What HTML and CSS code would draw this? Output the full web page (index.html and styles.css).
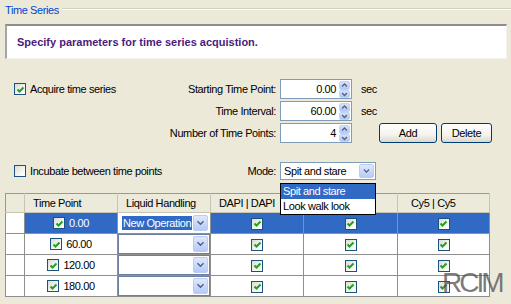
FILE: index.html
```html
<!DOCTYPE html>
<html lang="en">
<head>
  <meta charset="UTF-8" />
  <meta name="viewport" content="width=device-width, initial-scale=1" />
  <title>Time Series</title>
  <link rel="stylesheet" href="styles.css">
</head>
<body>
  <div class="panel">
    <div class="group-head">
      <span class="group-title">Time Series</span>
      <span class="group-line"></span>
    </div>

    <div class="message">Specify parameters for time series acquistion.</div>

    <div class="params">
      <label class="check-label">
        <span class="chk"><svg viewBox="0 0 9 9"><path d="M1.5 4.5 L3.5 6.5 L7.5 2.5" /></svg></span>
        Acquire time series
      </label>
      <span class="field-label">Starting Time Point:</span>
      <div class="spin">
        <span class="spin-value">0.00</span>
        <span class="spin-btns">
          <span class="spin-btn"><svg viewBox="0 0 11 8"><path d="M2.5 5.5 L5.5 2.5 L8.5 5.5" /></svg></span>
          <span class="spin-btn"><svg viewBox="0 0 11 8"><path d="M2.5 2.5 L5.5 5.5 L8.5 2.5" /></svg></span>
        </span>
      </div>
      <span class="unit">sec</span>
      <span></span>

      <span></span>
      <span class="field-label">Time Interval:</span>
      <div class="spin">
        <span class="spin-value">60.00</span>
        <span class="spin-btns">
          <span class="spin-btn"><svg viewBox="0 0 11 8"><path d="M2.5 5.5 L5.5 2.5 L8.5 5.5" /></svg></span>
          <span class="spin-btn"><svg viewBox="0 0 11 8"><path d="M2.5 2.5 L5.5 5.5 L8.5 2.5" /></svg></span>
        </span>
      </div>
      <span class="unit">sec</span>
      <span></span>

      <span></span>
      <span class="field-label">Number of Time Points:</span>
      <div class="spin">
        <span class="spin-value">4</span>
        <span class="spin-btns">
          <span class="spin-btn"><svg viewBox="0 0 11 8"><path d="M2.5 5.5 L5.5 2.5 L8.5 5.5" /></svg></span>
          <span class="spin-btn"><svg viewBox="0 0 11 8"><path d="M2.5 2.5 L5.5 5.5 L8.5 2.5" /></svg></span>
        </span>
      </div>
      <span></span>
      <div class="actions">
        <button class="btn add">Add</button>
        <button class="btn delete">Delete</button>
      </div>
    </div>

    <div class="params mode-row">
      <label class="check-label">
        <span class="chk empty"></span>
        Incubate between time points
      </label>
      <span class="field-label">Mode:</span>
      <div class="combo">
        <span class="combo-text">Spit and stare</span>
        <span class="combo-btn"><svg viewBox="0 0 15 16"><path d="M4 6 L7.5 9.5 L11 6" /></svg></span>
        <ul class="combo-list">
          <li class="picked">Spit and stare</li>
          <li>Look walk look</li>
        </ul>
      </div>
    </div>

    <table class="grid">
      <colgroup>
        <col style="width: 19px">
        <col style="width: 93px">
        <col style="width: 93px">
        <col style="width: 93px">
        <col style="width: 94px">
        <col style="width: 92px">
      </colgroup>
      <thead>
        <tr>
          <th></th>
          <th>Time Point</th>
          <th>Liquid Handling</th>
          <th>DAPI | DAPI</th>
          <th></th>
          <th class="wide-pad">Cy5 | Cy5</th>
        </tr>
      </thead>
      <tbody>
        <tr class="sel">
          <td class="row-head"></td>
          <td><div class="tp"><span class="chk sm"><svg viewBox="0 0 9 9"><path d="M1.5 4.5 L3.5 6.5 L7.5 2.5" /></svg></span>0.00</div></td>
          <td>
            <div class="cell-combo editing">
              <span class="cell-text"><span class="hl">New Operation</span></span>
              <span class="combo-btn"><svg viewBox="0 0 15 16"><path d="M4 6 L7.5 9.5 L11 6" /></svg></span>
            </div>
          </td>
          <td><span class="chk sm"><svg viewBox="0 0 9 9"><path d="M1.5 4.5 L3.5 6.5 L7.5 2.5" /></svg></span></td>
          <td><span class="chk sm"><svg viewBox="0 0 9 9"><path d="M1.5 4.5 L3.5 6.5 L7.5 2.5" /></svg></span></td>
          <td><span class="chk sm"><svg viewBox="0 0 9 9"><path d="M1.5 4.5 L3.5 6.5 L7.5 2.5" /></svg></span></td>
        </tr>
        <tr>
          <td class="row-head"></td>
          <td><div class="tp"><span class="chk sm"><svg viewBox="0 0 9 9"><path d="M1.5 4.5 L3.5 6.5 L7.5 2.5" /></svg></span>60.00</div></td>
          <td>
            <div class="cell-combo">
              <span class="cell-text"></span>
              <span class="combo-btn"><svg viewBox="0 0 15 16"><path d="M4 6 L7.5 9.5 L11 6" /></svg></span>
            </div>
          </td>
          <td><span class="chk sm"><svg viewBox="0 0 9 9"><path d="M1.5 4.5 L3.5 6.5 L7.5 2.5" /></svg></span></td>
          <td><span class="chk sm"><svg viewBox="0 0 9 9"><path d="M1.5 4.5 L3.5 6.5 L7.5 2.5" /></svg></span></td>
          <td><span class="chk sm"><svg viewBox="0 0 9 9"><path d="M1.5 4.5 L3.5 6.5 L7.5 2.5" /></svg></span></td>
        </tr>
        <tr>
          <td class="row-head"></td>
          <td><div class="tp"><span class="chk sm"><svg viewBox="0 0 9 9"><path d="M1.5 4.5 L3.5 6.5 L7.5 2.5" /></svg></span>120.00</div></td>
          <td>
            <div class="cell-combo">
              <span class="cell-text"></span>
              <span class="combo-btn"><svg viewBox="0 0 15 16"><path d="M4 6 L7.5 9.5 L11 6" /></svg></span>
            </div>
          </td>
          <td><span class="chk sm"><svg viewBox="0 0 9 9"><path d="M1.5 4.5 L3.5 6.5 L7.5 2.5" /></svg></span></td>
          <td><span class="chk sm"><svg viewBox="0 0 9 9"><path d="M1.5 4.5 L3.5 6.5 L7.5 2.5" /></svg></span></td>
          <td><span class="chk sm"><svg viewBox="0 0 9 9"><path d="M1.5 4.5 L3.5 6.5 L7.5 2.5" /></svg></span></td>
        </tr>
        <tr>
          <td class="row-head"></td>
          <td><div class="tp"><span class="chk sm"><svg viewBox="0 0 9 9"><path d="M1.5 4.5 L3.5 6.5 L7.5 2.5" /></svg></span>180.00</div></td>
          <td>
            <div class="cell-combo">
              <span class="cell-text"></span>
              <span class="combo-btn"><svg viewBox="0 0 15 16"><path d="M4 6 L7.5 9.5 L11 6" /></svg></span>
            </div>
          </td>
          <td><span class="chk sm"><svg viewBox="0 0 9 9"><path d="M1.5 4.5 L3.5 6.5 L7.5 2.5" /></svg></span></td>
          <td><span class="chk sm"><svg viewBox="0 0 9 9"><path d="M1.5 4.5 L3.5 6.5 L7.5 2.5" /></svg></span></td>
          <td><span class="chk sm"><svg viewBox="0 0 9 9"><path d="M1.5 4.5 L3.5 6.5 L7.5 2.5" /></svg></span></td>
        </tr>
      </tbody>
    </table>

    <div class="watermark">RCIM</div>
  </div>
</body>
</html>
```

FILE: styles.css
```css
* {
  box-sizing: border-box;
}

body {
  margin: 0;
  background: #ece9d8;
  font-family: 'Liberation Sans', Arial, sans-serif;
  font-size: 11px;
  letter-spacing: -0.4px;
  color: #000;
}

.panel {
  position: relative;
  width: 511px;
  height: 304px;
  overflow: hidden;
}

/* group box heading */
.group-head {
  display: flex;
  align-items: flex-start;
  height: 18px;
}

.group-title {
  color: #0046d5;
  padding: 4px 3px 0 5px;
  line-height: 12px;
}

.group-line {
  flex: 1;
  margin-top: 8px;
  border-top: 1px solid #d0d0bf;
  border-bottom: 1px solid #fff;
}

.message {
  margin: 6px 4px 0 5px;
  height: 35px;
  background: #fff;
  border-style: solid;
  border-width: 2px 1px 1px 2px;
  border-color: #8d8d8d #f4f3ee #f4f3ee #a5a5a5;
  padding-left: 10px;
  display: flex;
  align-items: center;
  font-weight: bold;
  color: #4c1a80;
  letter-spacing: 0;
}

/* parameter rows */
.params {
  display: grid;
  grid-template-columns: 146px 120px 72px 26px auto;
  grid-template-rows: repeat(3, 20px);
  row-gap: 2px;
  margin-top: 20px;
  padding-left: 14px;
  align-items: center;
}

.mode-row {
  grid-template-rows: 18px;
  margin-top: 19px;
}

.check-label {
  display: flex;
  align-items: center;
  gap: 4px;
  white-space: nowrap;
}

.field-label {
  text-align: right;
  padding-right: 4px;
  white-space: nowrap;
}

.unit {
  padding-left: 9px;
}

.chk {
  width: 12px;
  height: 12px;
  flex: none;
  display: inline-flex;
  align-items: center;
  justify-content: center;
  border: 1px solid #1c5180;
  background: linear-gradient(135deg, #dcdcd7, #f8f8f4 70%, #fff);
  vertical-align: middle;
}

.chk svg {
  width: 9px;
  height: 9px;
}

.chk path {
  fill: none;
  stroke: #21a121;
  stroke-width: 2;
}

.chk.sm {
  width: 12px;
  height: 12px;
}

.spin {
  display: flex;
  align-items: center;
  height: 20px;
  border: 1px solid #7f9db9;
  background: #fff;
  padding: 1px 1px 1px 0;
}

.spin-value {
  flex: 1;
  text-align: right;
  padding-right: 3px;
}

.spin-btns {
  display: flex;
  flex-direction: column;
  width: 11px;
  height: 16px;
}

.spin-btn {
  flex: 1;
  display: flex;
  background: linear-gradient(#d6e2fd, #b2c7f6);
  border: 1px solid #c3d3f8;
  border-radius: 2px;
}

.spin-btn svg {
  width: 100%;
  height: 100%;
}

.spin-btn path,
.combo-btn path {
  fill: none;
  stroke: #4d6185;
  stroke-width: 1.6;
}

.actions {
  display: flex;
  gap: 4px;
  padding-left: 1px;
}

.btn {
  height: 20px;
  padding: 0;
  border: 1px solid #003c74;
  border-radius: 3px;
  background: linear-gradient(#fefefe, #f4f3ee 60%, #dcd8cc);
  font-family: inherit;
  font-size: 11px;
  letter-spacing: -0.4px;
  color: #000;
}

.add {
  width: 58px;
}

.delete {
  width: 51px;
}

/* mode combo */
.combo {
  position: relative;
  grid-column: 3 / 5;
  width: 96px;
  height: 18px;
  display: flex;
  border: 1px solid #7f9db9;
  background: #fff;
  padding: 1px;
}

.combo-text {
  flex: 1;
  padding-left: 2px;
  line-height: 14px;
}

.combo-btn {
  width: 15px;
  flex: none;
  display: flex;
  background: linear-gradient(#dfe8fd, #b6caf6);
  border: 1px solid #bccdf4;
  border-radius: 2px;
}

.combo-btn svg {
  width: 100%;
  height: 100%;
}

.combo-list {
  position: absolute;
  left: -1px;
  top: 20px;
  width: 96px;
  margin: 0;
  padding: 0;
  list-style: none;
  background: #fff;
  border: 1px solid #000;
  z-index: 2;
}

.combo-list li {
  height: 15px;
  line-height: 15px;
  padding-left: 2px;
}

.combo-list .picked {
  background: #316ac5;
  color: #fff;
}

/* table */
.grid {
  margin: 13px 0 0 5px;
  width: 485px;
  border-collapse: collapse;
  table-layout: fixed;
  border: 1px solid #8e9aa8;
}

.grid th {
  height: 19px;
  padding: 0 0 0 8px;
  background: #ebeadb;
  font-weight: normal;
  text-align: left;
  border-right: 1px solid #c7c5b2;
  border-bottom: 1px solid #c7c5b2;
  white-space: nowrap;
}

.grid th.wide-pad {
  padding-left: 13px;
}

.grid td {
  height: 21px;
  padding: 0;
  text-align: center;
  background: #fff;
  border: 1px solid #8f8f8f;
}

.grid tr.sel td {
  background: #316ac5;
  color: #fff;
}

.grid tr.sel td.row-head {
  background: #fff;
}

.tp {
  display: flex;
  align-items: center;
  justify-content: center;
  gap: 4px;
}

.cell-combo {
  display: flex;
  height: 20px;
  padding: 1px;
  border: 1px solid #6d80a0;
  background: #fff;
}

.cell-combo.editing {
  border-color: #fff;
}

.cell-text {
  flex: 1;
  text-align: left;
  line-height: 16px;
  padding-left: 2px;
}

.hl {
  background: #316ac5;
  color: #fff;
  padding: 1px 1px;
}

.watermark {
  position: absolute;
  left: 442px;
  top: 269px;
  font-size: 28px;
  line-height: 28px;
  letter-spacing: -3px;
  color: rgba(80, 80, 80, 0.75);
}
```
